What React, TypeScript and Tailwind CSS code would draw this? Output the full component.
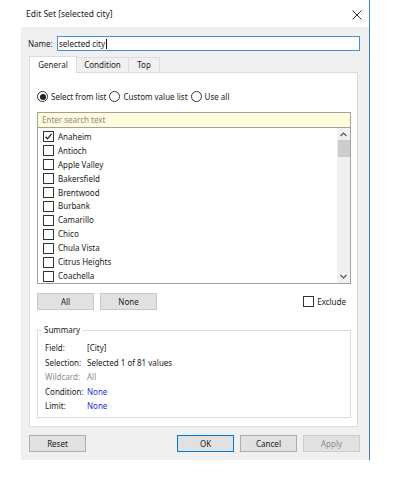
import { useState } from "react";

const cities = [
  "Anaheim",
  "Antioch",
  "Apple Valley",
  "Bakersfield",
  "Brentwood",
  "Burbank",
  "Camarillo",
  "Chico",
  "Chula Vista",
  "Citrus Heights",
  "Coachella",
];

const summary = [
  { label: "Field:", value: "[City]", tone: "text-[#1a1a1a]", labelTone: "text-[#1a1a1a]" },
  { label: "Selection:", value: "Selected 1 of 81 values", tone: "text-[#1a1a1a]", labelTone: "text-[#1a1a1a]" },
  { label: "Wildcard:", value: "All", tone: "text-[#8c8c8c]", labelTone: "text-[#8c8c8c]" },
  { label: "Condition:", value: "None", tone: "text-[#2b2bd0]", labelTone: "text-[#1a1a1a]" },
  { label: "Limit:", value: "None", tone: "text-[#2b2bd0]", labelTone: "text-[#1a1a1a]" },
];

function Checkbox({ checked }: { checked?: boolean }) {
  return (
    <span className="w-[11px] h-[11px] border border-[#333] bg-white flex items-center justify-center shrink-0">
      {checked && (
        <svg width="9" height="9" viewBox="0 0 9 9">
          <path d="M1.5 4.8 L3.5 6.8 L7.5 1.8" fill="none" stroke="#222" strokeWidth="1.3" />
        </svg>
      )}
    </span>
  );
}

function Radio({ checked }: { checked?: boolean }) {
  return (
    <span className="w-[11px] h-[11px] rounded-full border border-[#333] bg-white flex items-center justify-center shrink-0">
      {checked && <span className="w-[6px] h-[6px] rounded-full bg-[#222]" />}
    </span>
  );
}

function Button({ label, className }: { label: string; className?: string }) {
  return (
    <div
      className={`h-[17px] w-[57px] flex items-center justify-center border bg-[#e1e1e1] ${className ?? "border-[#adadad] text-[#1a1a1a]"}`}
    >
      {label}
    </div>
  );
}

export default function App() {
  const [name] = useState("selected city");

  return (
    <div className="w-[399px] h-[477px] bg-white text-[8px] leading-none text-[#1a1a1a] font-['Noto_Sans',sans-serif]">
      <div className="ml-[21px] w-[349px] h-[460px] border-r border-[#3c7fc4] flex flex-col">
        <div className="h-[27px] bg-white flex items-center justify-between pl-[5px] pr-[7px] pt-[2px]">
          <span className="text-[8.5px]">Edit Set [selected city]</span>
          <svg width="10" height="10" viewBox="0 0 10 10">
            <path d="M0.5 0.5 L9.5 9.5 M9.5 0.5 L0.5 9.5" stroke="#333" strokeWidth="1" />
          </svg>
        </div>

        <div className="flex-1 bg-[#f0f0f0] pl-[8px] pr-[9px] flex flex-col">
          <div className="mt-[9px] flex items-center">
            <span className="ml-[-1px] w-[29px]">Name:</span>
            <div className="flex-1 h-[15px] border border-[#4a8fd6] bg-white flex items-center pl-[1px]">
              {name}
              <span className="w-px h-[10px] bg-[#111] ml-px" />
            </div>
          </div>

          <div className="mt-[5px] flex items-end h-[16px] pr-[2px]">
            <div className="h-[17px] w-[48px] bg-white border-t border-l border-r border-[#dcdcdc] flex items-center justify-center relative top-px">
              General
            </div>
            <div className="h-[15px] w-[52px] bg-[#f0f0f0] border-t border-r border-[#dcdcdc] flex items-center justify-center">
              Condition
            </div>
            <div className="h-[15px] w-[31px] bg-[#f0f0f0] border-t border-r border-[#dcdcdc] flex items-center justify-center">
              Top
            </div>
          </div>

          <div className="h-[355px] mr-[2px] bg-white border border-[#dcdcdc] flex flex-col pl-[7px] pr-[6px]">
            <div className="mt-[18px] flex items-center gap-[3px]">
              <Radio checked />
              <span>Select from list</span>
              <Radio />
              <span>Custom value list</span>
              <Radio />
              <span>Use all</span>
            </div>

            <div className="mt-[10px] h-[16px] border border-[#a0a0a0] bg-[#fffcdb] flex items-center pl-[4px] text-[#8a8a8a]">
              Enter search text
            </div>
            <div className="h-[156px] border border-t-0 border-[#a0a0a0] flex">
              <div className="flex-1 flex flex-col pt-[2px] pl-[5px]">
                {cities.map((c, i) => (
                  <div key={c} className="h-[14px] flex items-center gap-[4px]">
                    <Checkbox checked={i === 0} />
                    <span>{c}</span>
                  </div>
                ))}
              </div>
              <div className="w-[13px] bg-[#f0f0f0] flex flex-col items-center">
                <svg className="mt-[4px]" width="7" height="5" viewBox="0 0 7 5">
                  <path d="M0.5 4 L3.5 1 L6.5 4" fill="none" stroke="#555" strokeWidth="1.2" />
                </svg>
                <div className="mt-[3px] w-[12px] h-[17px] bg-[#cdcdcd]" />
                <div className="flex-1" />
                <svg className="mb-[4px]" width="7" height="5" viewBox="0 0 7 5">
                  <path d="M0.5 1 L3.5 4 L6.5 1" fill="none" stroke="#555" strokeWidth="1.2" />
                </svg>
              </div>
            </div>

            <div className="mt-[9px] flex items-center">
              <Button label="All" className="border-[#c8c8c8] bg-[#e1e1e1] text-[#1a1a1a]" />
              <Button label="None" className="ml-[6px] border-[#c8c8c8] bg-[#e1e1e1] text-[#1a1a1a]" />
              <div className="flex-1" />
              <div className="flex items-center gap-[3px] mr-[5px]">
                <Checkbox />
                <span>Exclude</span>
              </div>
            </div>

            <div className="mt-[20px] h-[88px] border border-[#dcdcdc] relative flex flex-col pl-[7px] pt-[13px] gap-[6.5px]">
              <span className="absolute -top-[5px] left-[4px] bg-white px-[2px]">Summary</span>
              {summary.map((s) => (
                <div key={s.label} className="flex items-center h-[8px]">
                  <span className={`w-[42px] ${s.labelTone}`}>{s.label}</span>
                  <span className={s.tone}>{s.value}</span>
                </div>
              ))}
            </div>
          </div>

          <div className="mt-[8px] flex items-center">
            <Button label="Reset" className="border-[#adadad] text-[#1a1a1a]" />
            <div className="flex-1" />
            <Button label="OK" className="border-[#0078d7] border-[1.5px] text-[#1a1a1a]" />
            <Button label="Cancel" className="ml-[6px] border-[#adadad] text-[#1a1a1a]" />
            <Button label="Apply" className="ml-[6px] border-[#cccccc] bg-[#cccccc] text-[#8a8a8a]" />
          </div>
        </div>
      </div>
    </div>
  );
}
